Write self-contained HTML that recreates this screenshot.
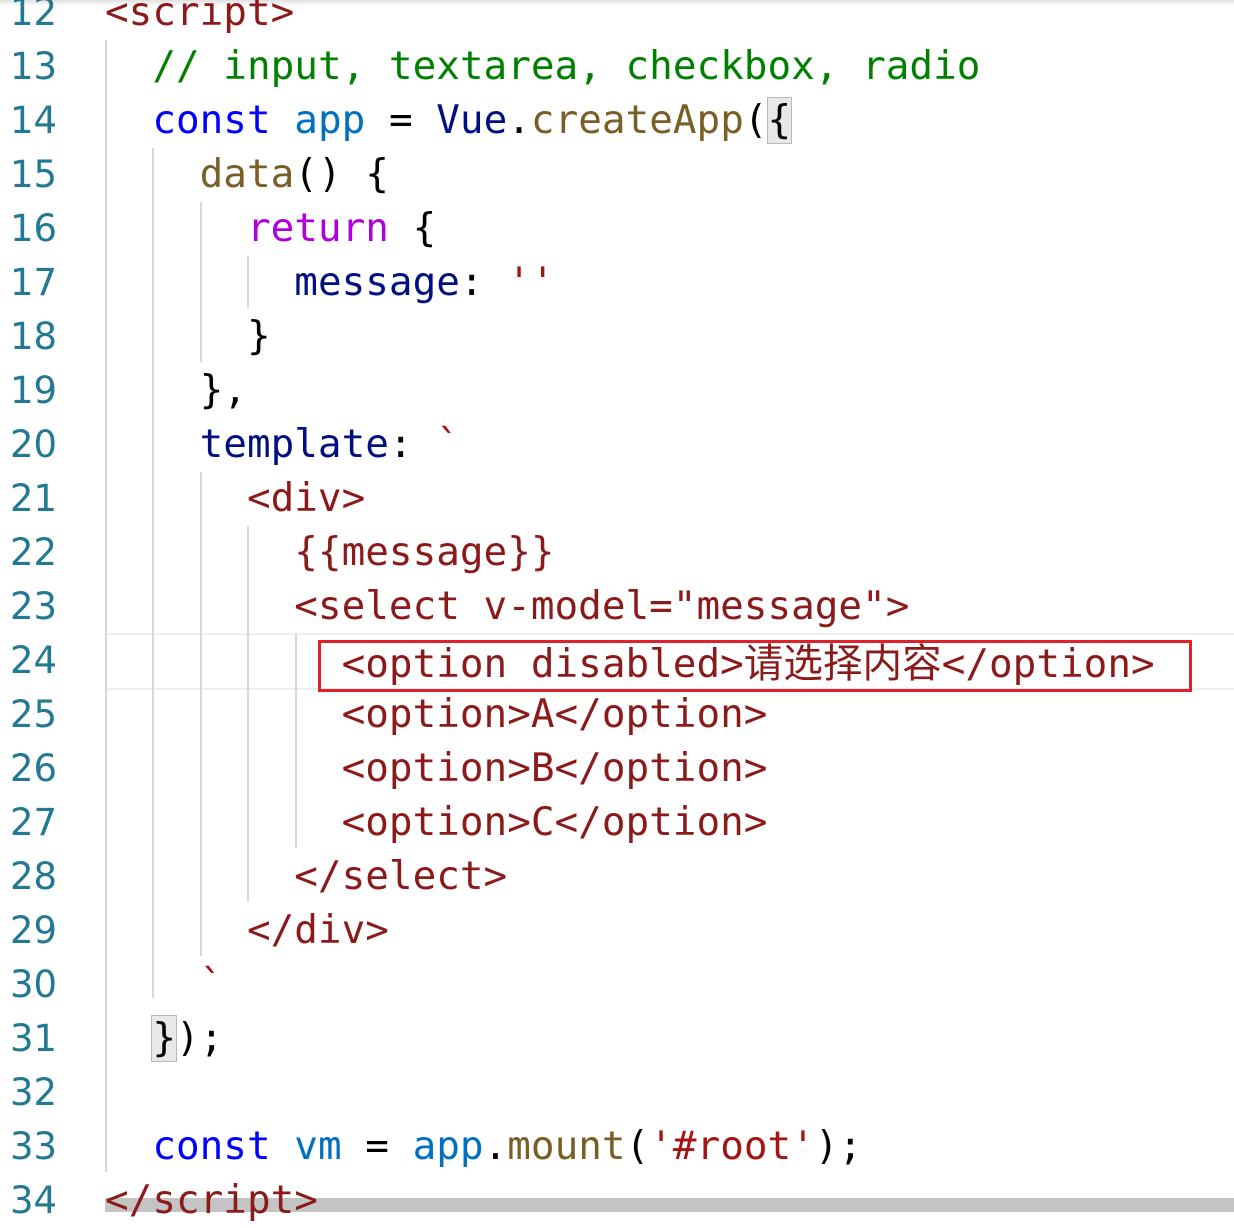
<!DOCTYPE html>
<html><head><meta charset="utf-8"><style>
body{margin:0;width:1234px;height:1212px;overflow:hidden;background:#fff;position:relative;font-family:"DejaVu Sans Mono","Liberation Mono","Noto Sans CJK SC",monospace;}
.ln{position:absolute;left:10px;font-size:37px;color:#237893;line-height:54px;font-family:"DejaVu Sans","Liberation Sans",sans-serif;}
.c{position:absolute;left:105px;font-size:39.3px;line-height:54px;white-space:pre;color:#000;}
.g{position:absolute;width:2px;background:#d8d8d8;}
.t{color:#8b1a1a}.cm{color:#008000}.k{color:#0000ff}.v{color:#0070c1}.n{color:#001080}.f{color:#795e26}.p{color:#af00db}.s{color:#a31515}
.cj{font-family:"Noto Sans CJK SC",sans-serif;font-size:39.6px}
.br{background:#e8e8e8;outline:1px solid #b9b9b9}
</style></head><body>
<div style="position:absolute;left:0;top:0;width:1234px;height:6px;background:linear-gradient(#e0e0e0,#fff)"></div>
<div style="position:absolute;left:105px;top:633px;width:1129px;height:53px;border-top:2px solid #eee;border-bottom:2px solid #eee"></div>
<div style="position:absolute;left:105px;top:1198px;width:1129px;height:14px;background:#c4c4c4"></div>
<div class="g" style="left:105px;top:40px;height:1132px"></div>
<div class="g" style="left:152px;top:148px;height:850px"></div>
<div class="g" style="left:200px;top:202px;height:160px"></div>
<div class="g" style="left:247px;top:256px;height:52px"></div>
<div class="g" style="left:200px;top:472px;height:484px"></div>
<div class="g" style="left:247px;top:526px;height:376px"></div>
<div class="g" style="left:295px;top:634px;height:214px"></div>
<div style="position:absolute;left:318px;top:640px;width:868px;height:46px;border:3px solid #e0202a"></div>

<div class="ln" style="top:-14px">12</div><div class="c" style="top:-14px"><span class="t">&lt;script&gt;</span></div>
<div class="ln" style="top:40px">13</div><div class="c" style="top:40px">  <span class="cm">// input, textarea, checkbox, radio</span></div>
<div class="ln" style="top:94px">14</div><div class="c" style="top:94px">  <span class="k">const</span> <span class="v">app</span> = <span class="n">Vue</span>.<span class="f">createApp</span>(<span class="br">{</span></div>
<div class="ln" style="top:148px">15</div><div class="c" style="top:148px">    <span class="f">data</span>() {</div>
<div class="ln" style="top:202px">16</div><div class="c" style="top:202px">      <span class="p">return</span> {</div>
<div class="ln" style="top:256px">17</div><div class="c" style="top:256px">        <span class="n">message</span>: <span class="s">''</span></div>
<div class="ln" style="top:310px">18</div><div class="c" style="top:310px">      }</div>
<div class="ln" style="top:364px">19</div><div class="c" style="top:364px">    },</div>
<div class="ln" style="top:418px">20</div><div class="c" style="top:418px">    <span class="n">template</span>: <span class="s">`</span></div>
<div class="ln" style="top:472px">21</div><div class="c t" style="top:472px">      &lt;div&gt;</div>
<div class="ln" style="top:526px">22</div><div class="c t" style="top:526px">        {{message}}</div>
<div class="ln" style="top:580px">23</div><div class="c t" style="top:580px">        &lt;select v-model="message"&gt;</div>
<div class="ln" style="top:634px">24</div><div class="c t" style="top:634px">          &lt;option disabled&gt;<span class="cj">请选择内容</span>&lt;/option&gt;</div>
<div class="ln" style="top:688px">25</div><div class="c t" style="top:688px">          &lt;option&gt;A&lt;/option&gt;</div>
<div class="ln" style="top:742px">26</div><div class="c t" style="top:742px">          &lt;option&gt;B&lt;/option&gt;</div>
<div class="ln" style="top:796px">27</div><div class="c t" style="top:796px">          &lt;option&gt;C&lt;/option&gt;</div>
<div class="ln" style="top:850px">28</div><div class="c t" style="top:850px">        &lt;/select&gt;</div>
<div class="ln" style="top:904px">29</div><div class="c t" style="top:904px">      &lt;/div&gt;</div>
<div class="ln" style="top:958px">30</div><div class="c" style="top:958px">    <span class="s">`</span></div>
<div class="ln" style="top:1012px">31</div><div class="c" style="top:1012px">  <span class="br">}</span>);</div>
<div class="ln" style="top:1066px">32</div>
<div class="ln" style="top:1120px">33</div><div class="c" style="top:1120px">  <span class="k">const</span> <span class="v">vm</span> = <span class="v">app</span>.<span class="f">mount</span>(<span class="s">'#root'</span>);</div>
<div class="ln" style="top:1174px">34</div><div class="c" style="top:1174px"><span class="t">&lt;/script&gt;</span></div>
</body></html>
